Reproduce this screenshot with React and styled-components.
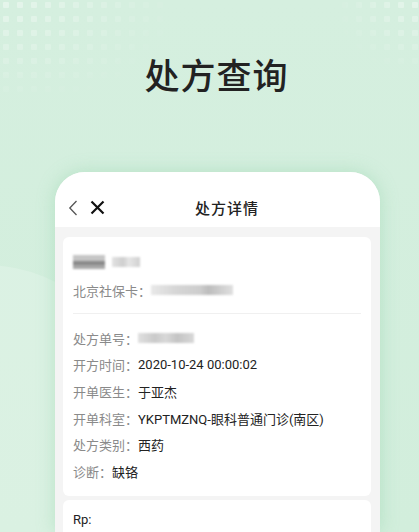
import styled, { createGlobalStyle } from 'styled-components'

//css
const Global = createGlobalStyle`
	html, body {
		margin: 0;
		padding: 0;
	}
	body {
		font-family: Roboto, "Noto Sans CJK SC", sans-serif;
	}
`

const Page = styled.div`
	position: relative;
	width: 419px;
	height: 532px;
	overflow: hidden;
	background: linear-gradient(180deg, #d5efdf 0%, #d2eedc 100%);
`

const Dots = styled.svg`
	position: absolute;
	top: 0;
	left: ${p => (p.right ? 'auto' : '0')};
	right: ${p => (p.right ? '0' : 'auto')};
`

const Circle = styled.div`
	position: absolute;
	left: -170px;
	top: 265px;
	width: 310px;
	height: 310px;
	border-radius: 50%;
	background: rgba(255, 255, 255, 0.18);
`

const Title = styled.h1`
	position: relative;
	margin: 0;
	padding: 53px 0 0 14px;
	height: 172px;
	box-sizing: border-box;
	text-align: center;
	font-family: "Noto Sans CJK SC", sans-serif;
	font-size: 35px;
	line-height: 42px;
	font-weight: 500;
	letter-spacing: 1px;
	color: #222;
`

const Phone = styled.div`
	position: relative;
	margin-left: 55px;
	width: 325px;
	height: 360px;
	border-radius: 30px 30px 0 0;
	background: #f4f4f4;
	overflow: hidden;
	box-shadow: 0 0 18px rgba(120, 200, 150, 0.35);
`

const Header = styled.div`
	display: flex;
	align-items: center;
	box-sizing: border-box;
	height: 55px;
	padding: 16px 13px 0;
	background: #fff;
`

const IconButton = styled.span`
	display: flex;
	align-items: center;
	margin-right: ${p => p.gap || 0}px;
`

const HeaderTitle = styled.div`
	flex: 1;
	text-align: center;
	padding-right: 18px;
	font-family: "Noto Sans CJK SC", sans-serif;
	font-size: 15px;
	font-weight: 500;
	color: #222;
	letter-spacing: 1px;
`

const Body = styled.div`
	display: flex;
	flex-direction: column;
	gap: 4px;
	padding: 10px 9px 0 8px;
`

const Card = styled.div`
	background: #fff;
	border-radius: 6px;
	padding: ${p => p.pad || '14px 10px 11px'};
`

const Line = styled.div`
	display: flex;
	align-items: center;
	height: ${p => p.h || 26.6}px;
	margin-top: ${p => p.mt || 0}px;
	font-family: "Noto Sans CJK SC", sans-serif;
	font-size: 13px;
	color: #222;
`

const Label = styled.span`
	color: #8a8a8a;
`

const Value = styled.span`
	font-family: Roboto, "Noto Sans CJK SC", sans-serif;
	font-size: 13px;
	color: #222;
`

const Divider = styled.div`
	height: 1px;
	background: #f0f0f0;
	margin: 12px 0 11px;
`

const Blur = styled.span`
	display: inline-block;
	width: ${p => p.w}px;
	height: ${p => p.h || 12}px;
	margin-left: ${p => p.ml || 0}px;
	background: ${p => p.bg};
	filter: blur(1.2px);
`

const Rp = styled.div`
	font-family: Roboto, sans-serif;
	font-size: 13px;
	line-height: 22px;
	color: #222;
`

const rows = [
	['开方时间：', '2020-10-24 00:00:02'],
	['开单医生：', '于亚杰'],
	['开单科室：', 'YKPTMZNQ-眼科普通门诊(南区)'],
	['处方类别：', '西药'],
	['诊断：', '缺铬'],
]

const DotGrid = ({ id, w, h, right }) => (
	<Dots right={right} width={w} height={h} viewBox={`0 0 ${w} ${h}`}>
		<defs>
			<pattern id={`p-${id}`} width='14' height='14' patternUnits='userSpaceOnUse'>
				<rect x='3' y='2' width='6' height='6' rx='1' fill='#fff' />
			</pattern>
			<radialGradient id={`g-${id}`} cx={right ? '100%' : '0%'} cy='0%' r='110%'>
				<stop offset='0%' stopColor='#fff' stopOpacity='0.4' />
				<stop offset='60%' stopColor='#fff' stopOpacity='0.15' />
				<stop offset='100%' stopColor='#fff' stopOpacity='0' />
			</radialGradient>
			<mask id={`m-${id}`}>
				<rect width={w} height={h} fill={`url(#g-${id})`} />
			</mask>
		</defs>
		<rect width={w} height={h} fill={`url(#p-${id})`} mask={`url(#m-${id})`} />
	</Dots>
)

const App = () => {
	return (
		<Page>
			<Global />
			<DotGrid id='l' w={170} h={100} />
			<DotGrid id='r' w={80} h={70} right />
			<Circle />

			<Title>处方查询</Title>

			<Phone>
				{/* header */}
				<Header>
					<IconButton gap={12}>
						<svg width='10' height='16' viewBox='0 0 10 16'>
							<path d='M8.5 1 L1.8 8 L8.5 15' fill='none' stroke='#555' strokeWidth='1.3' />
						</svg>
					</IconButton>
					<IconButton>
						<svg width='15' height='15' viewBox='0 0 15 15'>
							<path d='M1.5 1.5 L13.5 13.5 M13.5 1.5 L1.5 13.5' stroke='#111' strokeWidth='2.2' />
						</svg>
					</IconButton>
					<HeaderTitle>处方详情</HeaderTitle>
				</Header>

				{/* body */}
				<Body>
					<Card>
						<Line h={22}>
							<Blur w={32} h={14} bg='linear-gradient(180deg,#c6c6c6 0 40%,#8a8a8a 40% 70%,#a8a8a8 70%)' />
							<Blur w={28} h={10} ml={7} bg='linear-gradient(90deg,#e2e2e2,#cfcfcf 40%,#e6e6e6 60%,#d0d0d0)' />
						</Line>
						<Line h={22} mt={6}>
							<Label>北京社保卡：</Label>
							<Blur w={82} h={10} bg='linear-gradient(90deg,#e8e8e8,#d6d6d6 30%,#cdcdcd 60%,#bdbdbd 70%,#e0e0e0)' />
						</Line>
						<Divider />
						<Line>
							<Label>处方单号：</Label>
							<Blur w={56} h={10} bg='linear-gradient(90deg,#e0e0e0,#cacaca 30%,#d8d8d8 50%,#c4c4c4 70%,#d8d8d8)' />
						</Line>
						{rows.map(([k, v]) => (
							<Line key={k}>
								<Label>{k}</Label>
								<Value>{v}</Value>
							</Line>
						))}
					</Card>
					<Card pad='9px 10px'>
						<Rp>Rp:</Rp>
					</Card>
				</Body>
			</Phone>
		</Page>
	)
}

export default App
